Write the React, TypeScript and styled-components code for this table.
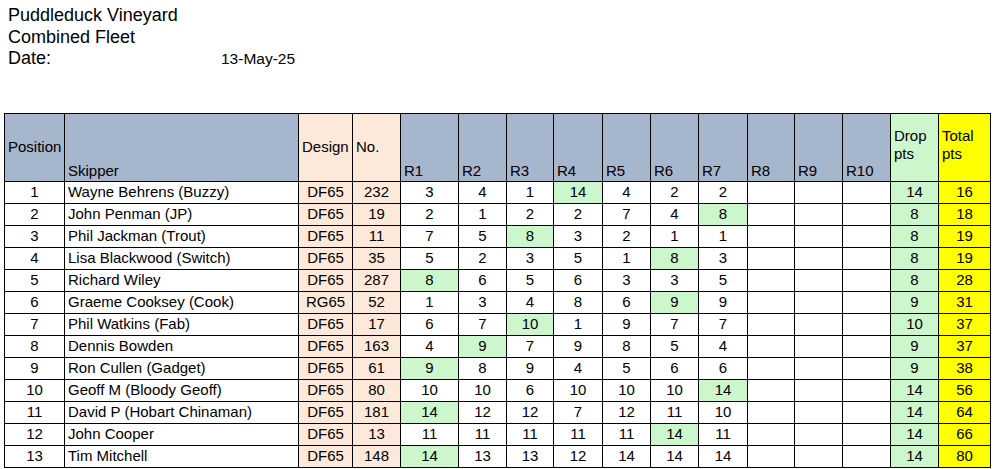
import React from 'react';
import styled, { createGlobalStyle } from 'styled-components';

const GlobalStyle = createGlobalStyle`
  body {
    margin: 0;
    background: #fff;
    font-family: "Liberation Sans", Arial, sans-serif;
    color: #000;
  }
`

const BLUE = '#a6b6cc'
const PEACH = '#fde9d9'
const GREEN = '#ccf7cc'
const YELLOW = '#ffff00'

const Page = styled.div`
  padding: 5px 0 0 4px;
`

const Heading = styled.div`
  padding-left: 4px;
  font-size: 18px;
  line-height: 21.5px;
`

const DateRow = styled.div`
  display: flex;
  align-items: baseline;
`

const DateLabel = styled.span`
  width: 213px;
`

const DateValue = styled.span`
  font-size: 15.5px;
`

const Sheet = styled.table`
  margin-top: 43px;
  border-collapse: collapse;
  table-layout: fixed;
  width: 987px;
  font-size: 15px;
`

const HeadRow = styled.tr`
  height: 68px;
`

const Row = styled.tr`
  height: 22px;
`

type CellProps = {
  $bg?: string
  $align?: 'left' | 'center'
  $valign?: 'middle' | 'bottom'
}

const HeadCell = styled.th<CellProps>`
  border: 1px solid #000;
  background: ${p => p.$bg || BLUE};
  font-weight: normal;
  text-align: left;
  vertical-align: ${p => p.$valign || 'middle'};
  padding: 0 0 1px 3px;
  line-height: 18px;
  white-space: nowrap;
  overflow: visible;
`

const WrapHead = styled(HeadCell)`
  white-space: normal;
  padding-bottom: 4px;
`

const Cell = styled.td<CellProps>`
  border: 1px solid #000;
  background: ${p => p.$bg || '#fff'};
  text-align: ${p => p.$align || 'center'};
  padding: 0 ${p => (p.$align === 'left' ? '0 0 3px' : '0')};
  line-height: 20px;
  white-space: nowrap;
  overflow: hidden;
`

type Entry = {
  name: string
  design: string
  no: number
  races: number[]
  dropAt: number
  drop: number
  total: number
}

const results: Entry[] = [
  { name: 'Wayne Behrens (Buzzy)', design: 'DF65', no: 232, races: [3, 4, 1, 14, 4, 2, 2], dropAt: 3, drop: 14, total: 16 },
  { name: 'John Penman (JP)', design: 'DF65', no: 19, races: [2, 1, 2, 2, 7, 4, 8], dropAt: 6, drop: 8, total: 18 },
  { name: 'Phil Jackman (Trout)', design: 'DF65', no: 11, races: [7, 5, 8, 3, 2, 1, 1], dropAt: 2, drop: 8, total: 19 },
  { name: 'Lisa Blackwood (Switch)', design: 'DF65', no: 35, races: [5, 2, 3, 5, 1, 8, 3], dropAt: 5, drop: 8, total: 19 },
  { name: 'Richard Wiley', design: 'DF65', no: 287, races: [8, 6, 5, 6, 3, 3, 5], dropAt: 0, drop: 8, total: 28 },
  { name: 'Graeme Cooksey (Cook)', design: 'RG65', no: 52, races: [1, 3, 4, 8, 6, 9, 9], dropAt: 5, drop: 9, total: 31 },
  { name: 'Phil Watkins (Fab)', design: 'DF65', no: 17, races: [6, 7, 10, 1, 9, 7, 7], dropAt: 2, drop: 10, total: 37 },
  { name: 'Dennis Bowden', design: 'DF65', no: 163, races: [4, 9, 7, 9, 8, 5, 4], dropAt: 1, drop: 9, total: 37 },
  { name: 'Ron Cullen (Gadget)', design: 'DF65', no: 61, races: [9, 8, 9, 4, 5, 6, 6], dropAt: 0, drop: 9, total: 38 },
  { name: 'Geoff M (Bloody Geoff)', design: 'DF65', no: 80, races: [10, 10, 6, 10, 10, 10, 14], dropAt: 6, drop: 14, total: 56 },
  { name: 'David P (Hobart Chinaman)', design: 'DF65', no: 181, races: [14, 12, 12, 7, 12, 11, 10], dropAt: 0, drop: 14, total: 64 },
  { name: 'John Cooper', design: 'DF65', no: 13, races: [11, 11, 11, 11, 11, 14, 11], dropAt: 5, drop: 14, total: 66 },
  { name: 'Tim Mitchell', design: 'DF65', no: 148, races: [14, 13, 13, 12, 14, 14, 14], dropAt: 0, drop: 14, total: 80 },
]

const colWidths = [60, 234, 54, 48, 58, 48, 47, 49, 48, 48, 49, 47, 48, 48, 48, 52]
const raceCols = Array.from({ length: 10 }, (_, i) => i)

function App() {
  return (
    <Page>
      <GlobalStyle />
      <Heading>
        <div>Puddleduck Vineyard</div>
        <div>Combined Fleet</div>
        <DateRow>
          <DateLabel>Date:</DateLabel>
          <DateValue>13-May-25</DateValue>
        </DateRow>
      </Heading>
      <Sheet>
        <colgroup>
          {colWidths.map((w, i) => (
            <col key={i} style={{ width: w }} />
          ))}
        </colgroup>
        <thead>
          <HeadRow>
            <HeadCell>Position</HeadCell>
            <HeadCell $valign="bottom">Skipper</HeadCell>
            <HeadCell $bg={PEACH}>Design</HeadCell>
            <HeadCell $bg={PEACH}>No.</HeadCell>
            {raceCols.map(i => (
              <HeadCell key={i} $valign="bottom">R{i + 1}</HeadCell>
            ))}
            <WrapHead $bg={GREEN}>Drop pts</WrapHead>
            <WrapHead $bg={YELLOW}>Total pts</WrapHead>
          </HeadRow>
        </thead>
        <tbody>
          {results.map((r, idx) => (
            <Row key={r.name}>
              <Cell>{idx + 1}</Cell>
              <Cell $align="left">{r.name}</Cell>
              <Cell $bg={PEACH}>{r.design}</Cell>
              <Cell $bg={PEACH}>{r.no}</Cell>
              {raceCols.map(i => (
                <Cell key={i} $bg={i === r.dropAt ? GREEN : undefined}>
                  {r.races[i] ?? ''}
                </Cell>
              ))}
              <Cell $bg={GREEN}>{r.drop}</Cell>
              <Cell $bg={YELLOW}>{r.total}</Cell>
            </Row>
          ))}
        </tbody>
      </Sheet>
    </Page>
  );
}

export default App;
